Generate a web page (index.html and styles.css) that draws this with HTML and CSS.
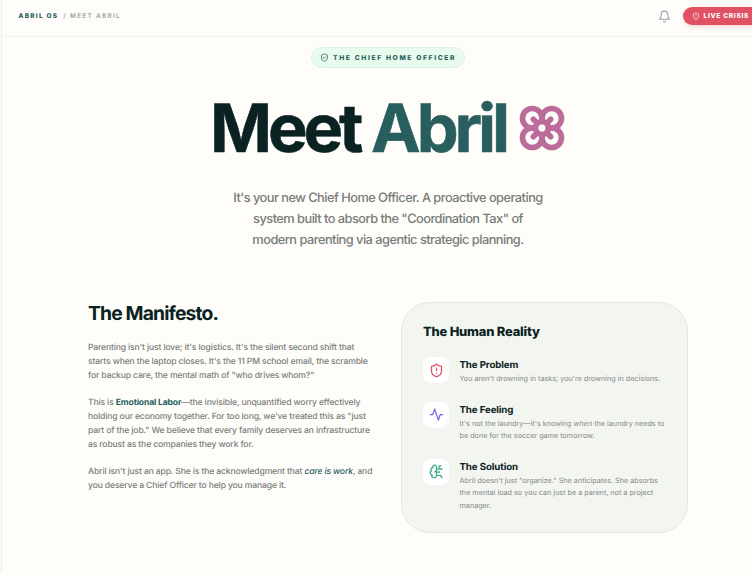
FILE: index.html
```html
<!DOCTYPE html>
<html lang="en">

<head>
    <meta charset="UTF-8">
    <meta name="viewport" content="width=device-width, initial-scale=1.0">
    <title>Meet Abril</title>
    <link rel="stylesheet" href="styles.css">
</head>

<body>
    <div class="page">
        <header class="topbar">
            <nav class="breadcrumb">
                <span class="brand">Abril OS</span>
                <span class="crumb">/ Meet Abril</span>
            </nav>
            <div class="actions">
                <svg class="icon bell" viewBox="0 0 24 24">
                    <path d="M6 8a6 6 0 0 1 12 0c0 7 3 9 3 9H3s3-2 3-9" />
                    <path d="M10.3 21a1.94 1.94 0 0 0 3.4 0" />
                </svg>
                <button class="crisis">
                    <svg class="icon" viewBox="0 0 24 24">
                        <path d="M20 13c0 5-3.500 7.500-7.660 8.950a1 1 0 0 1-.67-.01C7.500 20.500 4 18 4 13V6a1 1 0 0 1 1-1c2 0 4.500-1.200 6.240-2.720a1.170 1.170 0 0 1 1.520 0C14.510 3.810 17 5 19 5a1 1 0 0 1 1 1z" />
                        <path d="M12 8v4" />
                        <path d="M12 16h.01" />
                    </svg>
                    <span>Live Crisis</span>
                </button>
            </div>
        </header>

        <main>
            <section class="hero">
                <div class="badge">
                    <svg class="icon" viewBox="0 0 24 24">
                        <path d="M20 13c0 5-3.500 7.500-7.660 8.950a1 1 0 0 1-.67-.01C7.500 20.500 4 18 4 13V6a1 1 0 0 1 1-1c2 0 4.500-1.200 6.240-2.720a1.170 1.170 0 0 1 1.520 0C14.510 3.810 17 5 19 5a1 1 0 0 1 1 1z" />
                        <path d="m9 12 2 2 4-4" />
                    </svg>
                    <span>The Chief Home Officer</span>
                </div>
                <h1>
                    <span>Meet <span class="name">Abril</span></span>
                    <svg class="icon flower" viewBox="0 0 24 24">
                        <circle cx="12" cy="12" r="3" />
                        <path d="M12 16.500A4.500 4.500 0 1 1 7.500 12 4.500 4.500 0 1 1 12 7.500a4.500 4.500 0 1 1 4.500 4.500 4.500 4.500 0 1 1-4.500 4.500" />
                        <path d="M12 7.500V9M7.500 12H9M16.500 12H15M12 16.500V15" />
                        <path d="m8 8 1.880 1.880M14.120 9.880 16 8M8 16l1.880-1.880M14.120 14.120 16 16" />
                    </svg>
                </h1>
                <p class="lead">It's your new Chief Home Officer. A proactive operating<br>system built to absorb the "Coordination Tax" of<br>modern parenting via agentic strategic planning.</p>
            </section>

            <div class="columns">
                <section class="manifesto">
                    <h2>The Manifesto.</h2>
                    <p>Parenting isn't just love; it's logistics. It's the silent second shift that<br>starts when the laptop closes. It's the 11 PM school email, the scramble<br>for backup care, the mental math of "who drives whom?"</p>
                    <p>This is <strong>Emotional Labor</strong>—the invisible, unquantified worry effectively<br>holding our economy together. For too long, we've treated this as "just<br>part of the job." We believe that every family deserves an infrastructure<br>as robust as the companies they work for.</p>
                    <p>Abril isn't just an app. She is the acknowledgment that <em>care is work</em>, and<br>you deserve a Chief Officer to help you manage it.</p>
                </section>

                <section class="reality">
                    <h3>The Human Reality</h3>
                    <div class="item">
                        <div class="tile problem">
                            <svg class="icon" viewBox="0 0 24 24">
                                <path d="M20 13c0 5-3.500 7.500-7.660 8.950a1 1 0 0 1-.67-.01C7.500 20.500 4 18 4 13V6a1 1 0 0 1 1-1c2 0 4.500-1.200 6.240-2.720a1.170 1.170 0 0 1 1.520 0C14.510 3.810 17 5 19 5a1 1 0 0 1 1 1z" />
                                <path d="M12 8v4" />
                                <path d="M12 16h.01" />
                            </svg>
                        </div>
                        <div class="item-text">
                            <h4>The Problem</h4>
                            <p>You aren't drowning in tasks; you're drowning in decisions.</p>
                        </div>
                    </div>
                    <div class="item">
                        <div class="tile feeling">
                            <svg class="icon" viewBox="0 0 24 24">
                                <path d="M22 12h-4l-3 9L9 3l-3 9H2" />
                            </svg>
                        </div>
                        <div class="item-text">
                            <h4>The Feeling</h4>
                            <p>It's not the laundry—it's knowing <i>when</i> the laundry needs to<br>be done for the soccer game tomorrow.</p>
                        </div>
                    </div>
                    <div class="item">
                        <div class="tile solution">
                            <svg class="icon" viewBox="0 0 24 24">
                                <path d="M12 5a3 3 0 1 0-5.997.125 4 4 0 0 0-2.526 5.770 4 4 0 0 0 .556 6.588A4 4 0 1 0 12 18Z" />
                                <path d="M9 13a4.500 4.500 0 0 0 3-4" />
                                <path d="M6.003 5.125A3 3 0 0 0 6.401 6.500" />
                                <path d="M3.477 10.896a4 4 0 0 1 .585-.396" />
                                <path d="M6 18a4 4 0 0 1-1.967-.516" />
                                <path d="M12 13h4M12 18h6a2 2 0 0 1 2 2v1M12 8h8M16 8V5a2 2 0 0 1 2-2" />
                                <circle cx="16" cy="13" r=".5" />
                                <circle cx="18" cy="3" r=".5" />
                                <circle cx="20" cy="21" r=".5" />
                                <circle cx="20" cy="8" r=".5" />
                            </svg>
                        </div>
                        <div class="item-text">
                            <h4>The Solution</h4>
                            <p>Abril doesn't just "organize." She anticipates. She absorbs<br>the mental load so you can just be a parent, not a project<br>manager.</p>
                        </div>
                    </div>
                </section>
            </div>
        </main>
    </div>
</body>

</html>
```
FILE: styles.css
```css
* {
    box-sizing: border-box;
}

body {
    margin: 0;
    font-family: Inter, "Liberation Sans", sans-serif;
    background-color: #fefdf9;
    color: #0a2222;
    overflow: hidden;
    text-rendering: geometricPrecision;
}

h1, h2, h3, h4, p {
    margin: 0;
}

.page {
    height: 573px;
    margin-left: 1px;
    border-left: 1px solid #ebeeeb;
    overflow: hidden;
}

.icon {
    display: block;
    flex: none;
    fill: none;
    stroke: currentColor;
    stroke-width: 2;
    stroke-linecap: round;
    stroke-linejoin: round;
}

.topbar {
    display: flex;
    justify-content: space-between;
    align-items: center;
    height: 37px;
    padding: 0 0 4px 16.5px;
    border-bottom: 1px solid #f2f3f0;
}

.breadcrumb {
    display: flex;
    gap: 5px;
    font-size: 6.4px;
    font-weight: 700;
    letter-spacing: 1.3px;
    text-transform: uppercase;
}

.brand {
    color: #285e5e;
    font-weight: 800;
}

.crumb {
    color: #a9aaa8;
}

.actions {
    display: flex;
    align-items: center;
    gap: 12px;
    margin-right: -14px;
}

.bell {
    width: 13px;
    height: 13px;
    color: #94a3a8;
}

.crisis {
    display: flex;
    align-items: center;
    gap: 4px;
    width: 83px;
    height: 18px;
    padding: 0 0 0 8.5px;
    border: none;
    border-radius: 9px;
    background-color: #e05263;
    box-shadow: 0 2px 4px rgba(224, 82, 99, 0.2);
    color: #fff;
    font-family: inherit;
    font-size: 6.5px;
    font-weight: 800;
    letter-spacing: 0.75px;
    text-transform: uppercase;
    white-space: nowrap;
}

.crisis .icon {
    width: 8px;
    height: 8px;
}

.hero {
    display: flex;
    flex-direction: column;
    align-items: center;
    padding: 10px 0 0 22px;
}

.badge {
    display: flex;
    align-items: center;
    gap: 4px;
    width: 154px;
    height: 21px;
    padding-left: 8px;
    border: 1px solid #dcf3e2;
    border-radius: 11px;
    background-color: #e9fbec;
    color: #285e5e;
    font-size: 6.7px;
    font-weight: 800;
    letter-spacing: 1.65px;
    text-transform: uppercase;
    white-space: nowrap;
}

.badge .icon {
    width: 9px;
    height: 9px;
}

h1 {
    display: flex;
    align-items: center;
    gap: 10px;
    margin: 26px 0 0 2px;
    font-size: 66.6px;
    font-weight: 700;
    line-height: 64px;
    letter-spacing: -4.1px;
    white-space: nowrap;
    -webkit-text-stroke: 0.5px currentColor;
}

h1 > span {
    padding-top: 3px;
}

.name {
    color: #285e5e;
}

.flower {
    width: 52px;
    height: 52px;
    color: #bc6c9a;
    stroke-width: 2.6;
}

.lead {
    margin-top: 27px;
    color: #777b78;
    font-size: 12.8px;
    font-weight: 500;
    line-height: 21px;
    letter-spacing: -0.52px;
    text-align: center;
    white-space: nowrap;
}

.columns {
    display: grid;
    grid-template-columns: 284px 287px;
    gap: 29px;
    margin: 51px 0 0 86px;
}

.manifesto h2 {
    margin-top: -1px;
    font-size: 19.3px;
    line-height: 24px;
    letter-spacing: -0.85px;
    font-weight: 750;
}

.manifesto p {
    margin-bottom: 13px;
    color: #7b7e7b;
    font-size: 8.6px;
    font-weight: 500;
    line-height: 13.95px;
    letter-spacing: -0.15px;
    white-space: nowrap;
}

.manifesto h2 + p {
    margin-top: 17.3px;
}

.manifesto strong {
    color: #285e5e;
    font-weight: 700;
}

.manifesto em {
    color: #285e5e;
}

.reality {
    height: 231px;
    padding: 21px;
    border: 1px solid #e2e8e4;
    border-radius: 29px;
    background-color: #f3f5f1;
}

.reality h3 {
    margin: 0 0 -1px;
    font-size: 12.9px;
    font-weight: 800;
    line-height: 18px;
    letter-spacing: -0.2px;
}

.item {
    display: flex;
    gap: 10.5px;
    margin-top: 16.2px;
}

.item-text {
    padding-top: 1.7px;
}

.tile {
    display: flex;
    flex: none;
    align-items: center;
    justify-content: center;
    width: 26px;
    height: 26px;
    border-radius: 8px;
    background-color: #fff;
}

.tile .icon {
    width: 15px;
    height: 15px;
}

.problem {
    color: #e05263;
}

.feeling {
    color: #6d67dc;
}

.solution {
    color: #3fae92;
}

.item h4 {
    font-size: 9.7px;
    line-height: 14.4px;
    letter-spacing: -0.1px;
}

.item p {
    color: #858986;
    font-size: 7.23px;
    line-height: 12.4px;
    white-space: nowrap;
}
```
